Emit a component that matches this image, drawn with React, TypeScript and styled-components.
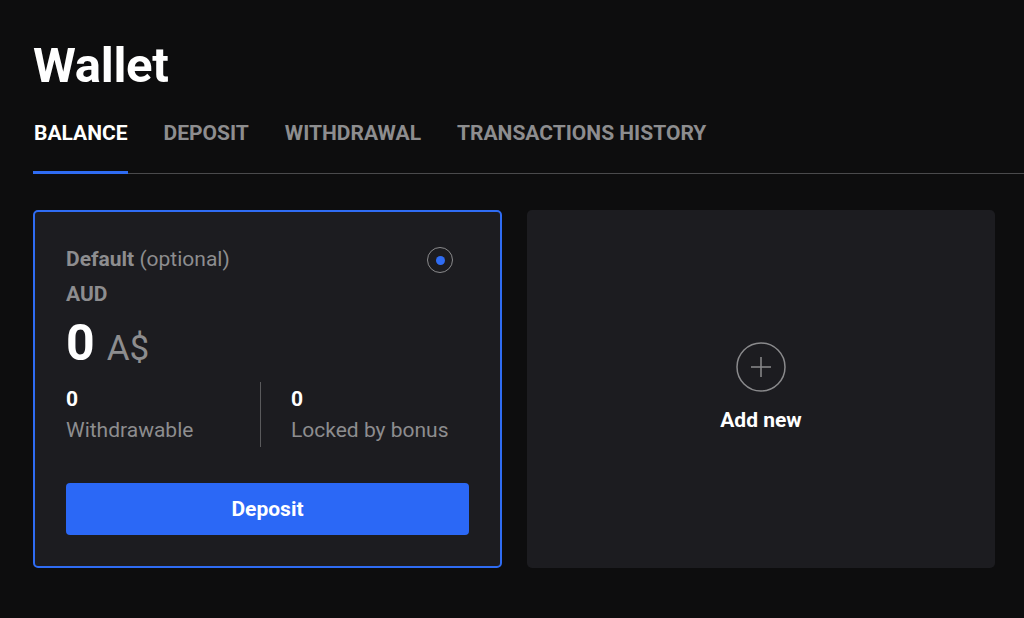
import React from 'react'
import styled, { createGlobalStyle } from 'styled-components'

const GlobalStyle = createGlobalStyle`
    html, body {
        margin: 0;
        padding: 0;
        background-color: #0d0d0e;
    }
    body {
        font-family: Roboto, 'Liberation Sans', sans-serif;
        color: #fff;
    }
`

const Page = styled.div`
    padding: 32px 0 0 33px;
    min-height: 618px;
    box-sizing: border-box;
    overflow: hidden;
`

const Title = styled.h1`
    margin: 0;
    font-size: 49px;
    font-weight: 700;
    line-height: 68px;
    letter-spacing: -0.3px;
`

const Tabs = styled.div`
    margin-top: 22px;
    display: flex;
    gap: 35px;
    border-bottom: 1px solid #4a4a4c;
`

const Tab = styled.div<{ $active?: boolean }>`
    position: relative;
    padding: 0 0 29px 1px;
    font-size: 21px;
    font-weight: 700;
    line-height: 22px;
    text-transform: uppercase;
    color: ${p => p.$active ? '#fff' : '#8d8d8f'};

    &::after {
        content: '';
        display: ${p => p.$active ? 'block' : 'none'};
        position: absolute;
        left: 0;
        right: 0;
        bottom: -1px;
        height: 3px;
        background-color: #2f6cf3;
    }
`

const Cards = styled.div`
    margin-top: 36px;
    display: grid;
    grid-template-columns: 469px 468px;
    gap: 25px;
`

const Card = styled.div<{ $selected?: boolean }>`
    box-sizing: border-box;
    height: 358px;
    border-radius: 5px;
    background-color: #1c1c20;
    border: 2px solid ${p => p.$selected ? '#2f6cf3' : 'transparent'};
`

const BalanceCard = styled(Card)`
    padding: 32px 31px 31px 31px;
    display: flex;
    flex-direction: column;
`

const CardHead = styled.div`
    display: flex;
    justify-content: space-between;
    align-items: flex-start;
`

const Label = styled.div`
    font-size: 21px;
    line-height: 30px;
    color: #8d8d8f;

    & b {
        font-weight: 700;
    }
`

const Currency = styled.div`
    margin-top: 9px;
    font-size: 21px;
    font-weight: 700;
    line-height: 22px;
    color: #8d8d8f;
`

const Radio = styled.div`
    margin: 3px 16px 0 0;
    width: 26px;
    height: 26px;
    box-sizing: border-box;
    border-radius: 50%;
    border: 1.5px solid #8a8a8c;
    display: flex;
    align-items: center;
    justify-content: center;

    &::before {
        content: '';
        width: 9px;
        height: 9px;
        border-radius: 50%;
        background-color: #2f6cf3;
    }
`

const Amount = styled.div`
    margin-top: 10px;
    display: flex;
    align-items: baseline;
    gap: 12px;
    line-height: 56px;
`

const AmountValue = styled.span`
    font-size: 50px;
    font-weight: 700;
    color: #fff;
`

const AmountCode = styled.span`
    font-size: 35px;
    font-weight: 400;
    color: #8d8d8f;
`

const Stats = styled.div`
    margin-top: 5px;
    display: grid;
    grid-template-columns: 194px 1fr;
`

const Stat = styled.div<{ $divided?: boolean }>`
    display: flex;
    flex-direction: column;
    gap: 8px;
    padding: 6px 0 5px ${p => p.$divided ? '30px' : '0'};
    border-left: ${p => p.$divided ? '1px solid #5a5a5c' : 'none'};
`

const StatValue = styled.div`
    font-size: 21px;
    font-weight: 700;
    line-height: 22px;
    color: #fff;
`

const StatLabel = styled.div`
    font-size: 21px;
    line-height: 24px;
    color: #8d8d8f;
`

const DepositButton = styled.button`
    margin-top: auto;
    height: 52px;
    width: 100%;
    border: none;
    border-radius: 4px;
    background-color: #2b68f6;
    color: #fff;
    font-family: inherit;
    font-size: 21px;
    font-weight: 700;
    cursor: pointer;
`

const AddCard = styled(Card)`
    display: flex;
    flex-direction: column;
    align-items: center;
    justify-content: center;
    gap: 17px;
    cursor: pointer;
`

const PlusCircle = styled.div`
    width: 50px;
    height: 50px;
    margin-top: -5px;
    color: #8a8a8c;

    & svg {
        display: block;
    }
`

const AddLabel = styled.div`
    font-size: 21px;
    font-weight: 700;
    line-height: 22px;
    color: #fff;
`

export default function App() {
    return (
        <>
            <GlobalStyle />
            <Page>
                <Title>Wallet</Title>
                <Tabs>
                    <Tab $active>Balance</Tab>
                    <Tab>Deposit</Tab>
                    <Tab>Withdrawal</Tab>
                    <Tab>Transactions history</Tab>
                </Tabs>
                <Cards>
                    <BalanceCard $selected>
                        <CardHead>
                            <div>
                                <Label><b>Default</b> (optional)</Label>
                                <Currency>AUD</Currency>
                            </div>
                            <Radio />
                        </CardHead>
                        <Amount>
                            <AmountValue>0</AmountValue>
                            <AmountCode>A$</AmountCode>
                        </Amount>
                        <Stats>
                            <Stat>
                                <StatValue>0</StatValue>
                                <StatLabel>Withdrawable</StatLabel>
                            </Stat>
                            <Stat $divided>
                                <StatValue>0</StatValue>
                                <StatLabel>Locked by bonus</StatLabel>
                            </Stat>
                        </Stats>
                        <DepositButton>Deposit</DepositButton>
                    </BalanceCard>
                    <AddCard>
                        <PlusCircle>
                            <svg width="50" height="50" viewBox="0 0 50 50" fill="none" stroke="currentColor" strokeWidth="1.5">
                                <circle cx="25" cy="25" r="24" />
                                <path d="M25 15v20M15 25h20" />
                            </svg>
                        </PlusCircle>
                        <AddLabel>Add new</AddLabel>
                    </AddCard>
                </Cards>
            </Page>
        </>
    )
}
